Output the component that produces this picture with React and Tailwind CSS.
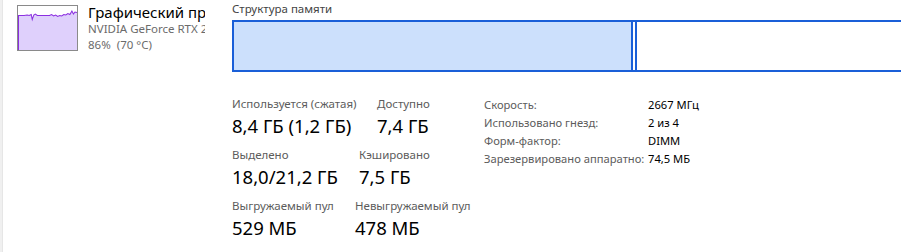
import React from "react";

const font = { fontFamily: '"Noto Sans", "Liberation Sans", sans-serif' };

function Thumb() {
  const line =
    "M0 9.5 L6 9.5 L9 9 L11 9.5 L13 8.5 L14 13.5 L15.5 9 L17 8 L19 9.5 L31 9.5 L33 8.5 L35 10 L37 9 L39 10.5 L41 9.5 L43 10 L45 8.5 L47 9 L49 7.5 L51 8.5 L53 5 L54.5 8 L56 6 L58 6.5";
  return (
    <div className="w-[61px] h-[46px] border border-[#8a8a8a] bg-white shrink-0">
      <svg width="59" height="44" viewBox="0 0 58 44" preserveAspectRatio="none" className="block">
        <path d={line + " L58 44 L0 44 Z"} fill="#dfd0fc" />
        <path d={line} fill="none" stroke="#8b2fe0" strokeWidth="1" />
        <line x1="0.5" y1="9.5" x2="0.5" y2="44" stroke="#8b2fe0" strokeWidth="1" />
      </svg>
    </div>
  );
}

function Stat({ label, value, w }) {
  return (
    <div className={w}>
      <div className="text-[11.5px] leading-[16px] text-[#5c5c5c] whitespace-nowrap">{label}</div>
      <div className="text-[18.5px] leading-[28px] text-black whitespace-nowrap">{value}</div>
    </div>
  );
}

export default function App() {
  const rows = [
    ["Скорость:", "2667 МГц"],
    ["Использовано гнезд:", "2 из 4"],
    ["Форм-фактор:", "DIMM"],
    ["Зарезервировано аппаратно:", "74,5 МБ"],
  ];
  return (
    <div className="w-[901px] h-[252px] bg-white flex overflow-hidden" style={font}>
      <div className="w-[3px] h-full bg-[#f0f0f0] border-r border-[#e6e6e6] shrink-0" />
      <div className="w-[202px] shrink-0 flex pl-[14px] pt-[5px] overflow-hidden">
        <Thumb />
        <div className="ml-[10px] -mt-[2px] overflow-hidden whitespace-nowrap">
          <div className="text-[15px] leading-[18px] text-black">Графический про</div>
          <div className="text-[11.5px] leading-[16px] text-[#6b6b6b]">NVIDIA GeForce RTX 20</div>
          <div className="text-[11.5px] leading-[16px] text-[#6b6b6b]">86%&nbsp; (70 °C)</div>
        </div>
      </div>
      <div className="ml-[27px] pt-[1px] flex-1 min-w-0">
        <div className="text-[11.5px] leading-[16px] text-[#444]">Структура памяти</div>
        <div className="mt-[3px] w-[690px] h-[52px] border-2 border-[#1a5fd8] flex">
          <div className="w-[399px] h-full bg-[#cce0fc] border-r-2 border-[#1a5fd8] shrink-0" />
          <div className="w-[2px] h-full shrink-0" />
          <div className="flex-1 h-full border-l-2 border-[#1a5fd8]" />
        </div>
        <div className="mt-[24px] flex">
          <div className="w-[252px] flex flex-col gap-[7px]">
            <div className="flex">
              <Stat w="w-[145px]" label="Используется (сжатая)" value="8,4 ГБ (1,2 ГБ)" />
              <Stat label="Доступно" value="7,4 ГБ" />
            </div>
            <div className="flex">
              <Stat w="w-[127px]" label="Выделено" value="18,0/21,2 ГБ" />
              <Stat label="Кэшировано" value="7,5 ГБ" />
            </div>
            <div className="flex">
              <Stat w="w-[123px]" label="Выгружаемый пул" value="529 МБ" />
              <Stat label="Невыгружаемый пул" value="478 МБ" />
            </div>
          </div>
          <div className="flex flex-col">
            {rows.map(([l, v]) => (
              <div key={l} className="flex text-[11.2px] leading-[18px] whitespace-nowrap">
                <div className="w-[164px] text-[#5c5c5c]">{l}</div>
                <div className="text-black">{v}</div>
              </div>
            ))}
          </div>
        </div>
      </div>
    </div>
  );
}
